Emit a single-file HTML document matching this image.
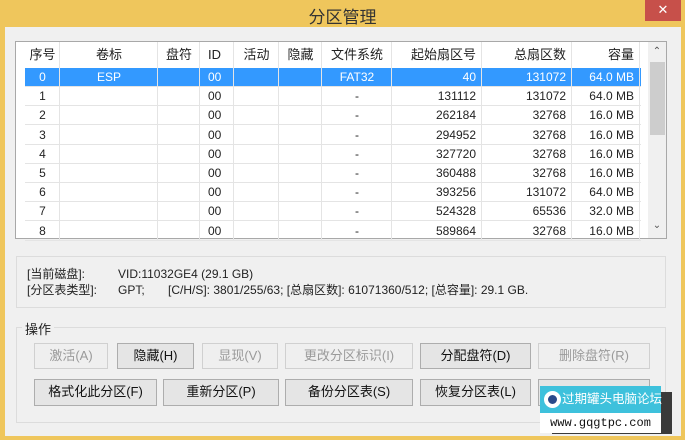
<!DOCTYPE html>
<html><head><meta charset="utf-8"><style>
*{margin:0;padding:0;box-sizing:border-box}
body{width:685px;height:440px;background:#efc65c;font-family:"Liberation Sans","Noto Sans CJK SC",sans-serif;font-size:12px;color:#222;position:relative;overflow:hidden}
.a{position:absolute}
.client{left:5px;top:27px;width:676px;height:409px;background:#f0f0f0}
.title{left:0;top:3px;width:685px;text-align:center;font-size:17px;color:#333}
.close{left:645px;top:0;width:36px;height:21px;background:#c7504a;color:#fff;text-align:center;font-size:13px;line-height:20px}
.list{left:15px;top:41px;width:652px;height:198px;background:#fff;border:1px solid #a8a8a8}
.cell{position:absolute;height:19px;line-height:19px;white-space:nowrap}
.vl{position:absolute;width:1px;background:#e4e4e4}
.hl{position:absolute;height:1px;background:#e4e4e4;left:9px;width:616px}
.sel{position:absolute;left:9px;width:616px;top:26px;height:18px;background:#3399ff}
.grp{border:1px solid #dcdcdc}
.btn{position:absolute;border:1px solid #adadad;background:#e5e5e5;text-align:center;font-size:13px;line-height:24px;color:#111}
.dis{border-color:#d0d0d0;background:#efefef;color:#9a9a9a}
</style></head><body>
<div class="a title">分区管理</div>
<div class="a close">✕</div>
<div class="a client"></div>
<div class="a list">
<div class="sel"></div>
<div id="g"></div>
<div class="a" style="left:632px;top:0;width:18px;height:196px;background:#f0f0f0"></div>
<div class="a" style="left:634px;top:20px;width:15px;height:73px;background:#cdcdcd"></div>
<div class="a" style="left:632px;top:4px;width:18px;text-align:center;font-size:10px;color:#555">&#8963;</div>
<div class="a" style="left:632px;top:178px;width:18px;text-align:center;font-size:10px;color:#555">&#8964;</div>
</div>
<div class="a grp" style="left:16px;top:256px;width:650px;height:52px"></div>
<div class="a" style="left:27px;top:266px;line-height:16px;font-size:12px">[当前磁盘]:<br>[分区表类型]:</div>
<div class="a" style="left:118px;top:266px;line-height:16px;font-size:12px">VID:11032GE4 (29.1 GB)<br>GPT;&nbsp;&nbsp;&nbsp;&nbsp;&nbsp;&nbsp;&nbsp;[C/H/S]: 3801/255/63; [总扇区数]: 61071360/512; [总容量]: 29.1 GB.</div>
<div class="a grp" style="left:16px;top:327px;width:650px;height:96px"></div>
<div class="a" style="left:22px;top:319px;font-size:13px;background:#f0f0f0;padding:0 3px">操作</div>
<div class="btn dis" style="left:34px;top:343px;width:74px;height:26px">激活(A)</div>
<div class="btn" style="left:117px;top:343px;width:77px;height:26px">隐藏(H)</div>
<div class="btn dis" style="left:202px;top:343px;width:76px;height:26px">显现(V)</div>
<div class="btn dis" style="left:285px;top:343px;width:128px;height:26px">更改分区标识(I)</div>
<div class="btn" style="left:420px;top:343px;width:111px;height:26px">分配盘符(D)</div>
<div class="btn dis" style="left:538px;top:343px;width:112px;height:26px">删除盘符(R)</div>
<div class="btn" style="left:34px;top:379px;width:123px;height:27px">格式化此分区(F)</div>
<div class="btn" style="left:163px;top:379px;width:116px;height:27px">重新分区(P)</div>
<div class="btn" style="left:285px;top:379px;width:128px;height:27px">备份分区表(S)</div>
<div class="btn" style="left:420px;top:379px;width:111px;height:27px">恢复分区表(L)</div>
<div class="btn" style="left:538px;top:379px;width:112px;height:27px"></div>
<div class="a" style="left:552px;top:392px;width:120px;height:42px;background:#3a3a3a"></div>
<div class="a" style="left:540px;top:386px;width:121px;height:27px;background:#3ec1dc;color:#fff;font-size:12.5px;line-height:27px;padding-left:22px;white-space:nowrap">过期罐头电脑论坛</div>
<div class="a" style="left:544px;top:391px;width:17px;height:17px;border-radius:50%;border:4px solid #fff;background:#2a4a8a"></div>
<div class="a" style="left:540px;top:413px;width:121px;height:20px;background:#fff;color:#111;font-size:12px;line-height:20px;text-align:center;font-family:'Liberation Mono',monospace">www.gqgtpc.com</div>
<script>
var cols=[9,44,142,184,218,263,306,376,466,556,624];
var heads=["序号","卷标","盘符","ID","活动","隐藏","文件系统","起始扇区号","总扇区数","容量"];
var al=["c","c","c","l","c","c","c","r","r","r"];
var rows=[["0","ESP","","00","","","FAT32","40","131072","64.0 MB"],
["1","","","00","","","-","131112","131072","64.0 MB"],
["2","","","00","","","-","262184","32768","16.0 MB"],
["3","","","00","","","-","294952","32768","16.0 MB"],
["4","","","00","","","-","327720","32768","16.0 MB"],
["5","","","00","","","-","360488","32768","16.0 MB"],
["6","","","00","","","-","393256","131072","64.0 MB"],
["7","","","00","","","-","524328","65536","32.0 MB"],
["8","","","00","","","-","589864","32768","16.0 MB"]];
var h="";
for(var i=1;i<cols.length;i++)h+='<div class="vl" style="left:'+(cols[i]-1)+'px;top:0;height:198px"></div>';
function row(r,top,color,fs){var s="";for(var j=0;j<r.length;j++){var l=cols[j],w=cols[j+1]-cols[j];var ta=al[j]=="c"?"center":al[j]=="r"?"right":"left";var pad=al[j]=="r"?"padding-right:6px;":al[j]=="l"?"padding-left:8px;":"";
s+='<div class="cell" style="left:'+l+'px;width:'+w+'px;top:'+top+'px;text-align:'+ta+';'+pad+'color:'+color+';font-size:'+fs+'px">'+r[j]+'</div>';}return s;}
h+=row(heads,3,"#222",13);
for(var k=0;k<rows.length;k++){var t=26+k*19.2;h+='<div class="hl" style="top:'+Math.round(t+18)+'px"></div>';h+=row(rows[k],Math.round(t),k==0?"#fff":"#222",12);}
document.getElementById("g").innerHTML=h;
</script>
</body></html>
